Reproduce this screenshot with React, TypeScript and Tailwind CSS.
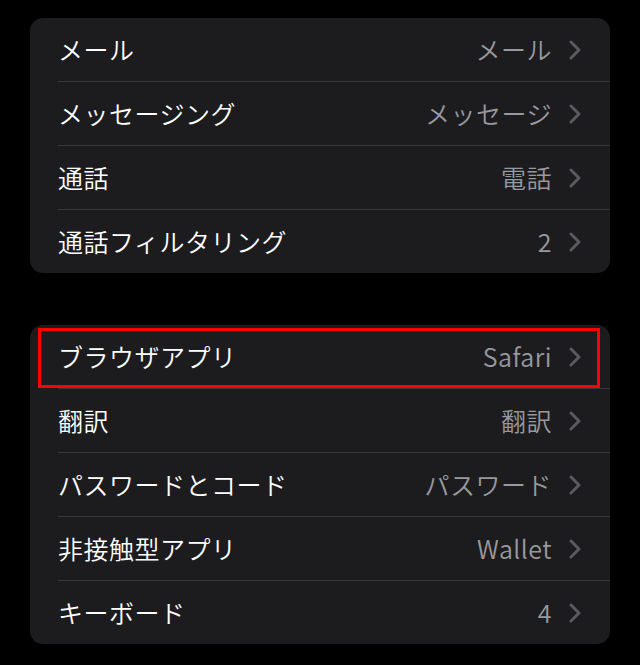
import React from "react";

type Row = { label: string; value: string };

const group1: Row[] = [
  { label: "メール", value: "メール" },
  { label: "メッセージング", value: "メッセージ" },
  { label: "通話", value: "電話" },
  { label: "通話フィルタリング", value: "2" },
];

const group2: Row[] = [
  { label: "ブラウザアプリ", value: "Safari" },
  { label: "翻訳", value: "翻訳" },
  { label: "パスワードとコード", value: "パスワード" },
  { label: "非接触型アプリ", value: "Wallet" },
  { label: "キーボード", value: "4" },
];

function Chevron() {
  return (
    <svg width="12" height="20" viewBox="0 0 12 20" className="shrink-0">
      <path
        d="M2 2 L10 10 L2 18"
        fill="none"
        stroke="#5a5a5f"
        strokeWidth="3"
        strokeLinecap="round"
        strokeLinejoin="round"
      />
    </svg>
  );
}

function Group({ rows, highlightFirst }: { rows: Row[]; highlightFirst?: boolean }) {
  return (
    <div className="relative mx-[30px] rounded-[13px] bg-[#1c1c1e] overflow-hidden">
      {rows.map((r, i) => (
        <div key={r.label}>
          {i > 0 && <div className="ml-[28px] h-px bg-[#38383a]" />}
          <div className="flex h-[63px] items-center pl-[28px] pr-[29px]">
            <span className="flex-1 text-[25px] font-[350] leading-none text-white tracking-[0.5px]">{r.label}</span>
            <span className="text-[25px] font-[350] leading-none text-[#98989f] tracking-[0.5px]">{r.value}</span>
            <span className="ml-[17px] flex items-center">
              <Chevron />
            </span>
          </div>
        </div>
      ))}
      {highlightFirst && (
        <div className="absolute left-[8px] top-[3px] h-[60px] w-[562px] border-[3px] border-[#ff0000]" />
      )}
    </div>
  );
}

export default function App() {
  return (
    <div
      className="w-[640px] h-[665px] bg-black pt-[18px]"
      style={{ fontFamily: '"Noto Sans CJK JP", "Noto Sans", sans-serif' }}
    >
      <Group rows={group1} />
      <div className="h-[52px]" />
      <Group rows={group2} highlightFirst />
    </div>
  );
}
